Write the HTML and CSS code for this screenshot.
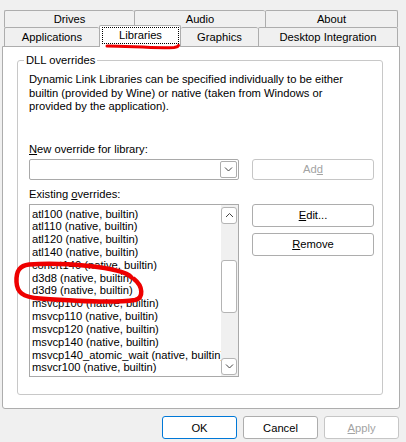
FILE: index.html
```html
<!DOCTYPE html>
<html>
<head>
<meta charset="utf-8">
<link rel="stylesheet" href="styles.css">
</head>
<body>
<div class="window">
  <div class="tabs">
    <div class="tabrow back">
      <div class="tab t-drives">Drives</div>
      <div class="tab t-audio">Audio</div>
      <div class="tab t-about last">About</div>
    </div>
    <div class="tabrow front">
      <div class="tab t-apps">Applications</div>
      <div class="tab selected t-libs"><span class="focus">Libraries</span></div>
      <div class="tab t-gfx">Graphics</div>
      <div class="tab t-desk last">Desktop Integration</div>
    </div>
  </div>
  <div class="panel">
    <fieldset class="group">
      <legend>DLL overrides</legend>
      <p class="desc">Dynamic Link Libraries can be specified individually to be either<br>builtin (provided by Wine) or native (taken from Windows or<br>provided by the application).</p>
      <div class="grid">
        <div class="lbl lbl-new"><u>N</u>ew override for library:</div>
        <div class="combo">
          <span class="drop">
            <svg width="9" height="6" viewBox="0 0 9 6"><path d="M1 1.5 L4.5 5 L8 1.5" fill="none" stroke="#444" stroke-width="1"/></svg>
          </span>
        </div>
        <button class="btn disabled add">Ad<u>d</u></button>
        <div class="lbl lbl-exist">Existing <u>o</u>verrides:</div>
        <div class="list">
          <div class="items">
            <div class="item">atl100 (native, builtin)</div>
            <div class="item">atl110 (native, builtin)</div>
            <div class="item">atl120 (native, builtin)</div>
            <div class="item">atl140 (native, builtin)</div>
            <div class="item">concrt140 (native, builtin)</div>
            <div class="item">d3d8 (native, builtin)</div>
            <div class="item">d3d9 (native, builtin)</div>
            <div class="item">msvcp100 (native, builtin)</div>
            <div class="item">msvcp110 (native, builtin)</div>
            <div class="item">msvcp120 (native, builtin)</div>
            <div class="item">msvcp140 (native, builtin)</div>
            <div class="item">msvcp140_atomic_wait (native, builtin)</div>
            <div class="item">msvcr100 (native, builtin)</div>
          </div>
          <div class="scroll">
            <span class="sbtn"><svg width="9" height="6" viewBox="0 0 9 6"><path d="M1 5 L4.5 1.5 L8 5" fill="none" stroke="#444" stroke-width="1"/></svg></span>
            <span class="thumb"></span>
            <span class="sbtn down"><svg width="9" height="6" viewBox="0 0 9 6"><path d="M1 1.5 L4.5 5 L8 1.5" fill="none" stroke="#444" stroke-width="1"/></svg></span>
          </div>
        </div>
        <div class="side">
          <button class="btn"><u>E</u>dit...</button>
          <button class="btn"><u>R</u>emove</button>
        </div>
      </div>
    </fieldset>
  </div>
  <div class="footer">
    <button class="btn fbtn default">OK</button>
    <button class="btn fbtn">Cancel</button>
    <button class="btn fbtn disabled"><u>A</u>pply</button>
  </div>
  <svg class="annot" width="406" height="442" viewBox="0 0 406 442">
    <path d="M107 46 C 128 46, 152 48.5, 174 47.5 Q 178 47 178.5 45.5" fill="none" stroke="#ee0000" stroke-width="3" stroke-linecap="round"/>
    <path d="M131 277 C 122 267, 62 262, 29 264.5 C 19 265.5, 16 272, 16.5 282 C 17 292, 22 297, 40 298.5 C 80 301.5, 118 302.5, 135 300 C 144 298, 143 286, 134 279" fill="none" stroke="#ee0000" stroke-width="4.5" stroke-linecap="round"/>
  </svg>
</div>
</body>
</html>
```
FILE: styles.css
```css
html, body {
  margin: 0;
  padding: 0;
}
body {
  background: #f0f0f0;
  font-family: "Liberation Sans", Arial, sans-serif;
  font-size: 11.2px;
  color: #000;
}
.window {
  position: relative;
  width: 406px;
  height: 442px;
  box-sizing: border-box;
  padding-top: 10px;
  overflow: hidden;
}
.tabs {
  margin-left: 4px;
}
.tabrow {
  display: flex;
  align-items: flex-start;
}
.tab {
  box-sizing: border-box;
  border: 1px solid #adadad;
  border-bottom: none;
  border-right: none;
  border-radius: 2px 2px 0 0;
  background: #f0f0f0;
  text-align: center;
  white-space: nowrap;
}
.tab.last {
  border-right: 1px solid #adadad;
}
.back .tab {
  height: 17px;
  line-height: 16px;
}
.front .tab {
  height: 19px;
  line-height: 18px;
}
.t-drives { width: 130px; }
.t-audio { width: 131px; }
.t-about { width: 133px; }
.t-apps { width: 95px; }
.t-libs { width: 82px; }
.t-gfx { width: 77px; border-left: none; }
.t-desk { width: 140px; }
.front .tab.selected {
  position: relative;
  z-index: 1;
  height: 22px;
  margin-top: -2px;
  margin-bottom: -1px;
  background: #fff;
  border-right: 1px solid #adadad;
  padding: 1px 1px 0 2px;
  line-height: 15px;
}
.focus {
  display: block;
  box-sizing: border-box;
  height: 17px;
  border: 1px dotted #000;
}
.panel {
  box-sizing: border-box;
  margin-left: 2px;
  width: 398px;
  height: 363px;
  background: #fff;
  border: 1px solid #adadad;
  border-radius: 0 0 3px 3px;
}
.group {
  box-sizing: border-box;
  width: 366px;
  height: 341px;
  margin: 7px 0 0 14px;
  padding: 7px 8px 0 11px;
  border: 1px solid #c8c8c8;
  border-radius: 3px;
  min-width: 0;
}
.group legend {
  padding: 0 2px;
  margin-left: -5px;
  line-height: 12px;
}
.desc {
  margin: 0 0 28px 0;
  line-height: 13.5px;
  white-space: nowrap;
}
.grid {
  display: grid;
  grid-template-columns: 210px 122px;
  column-gap: 13px;
  align-items: start;
}
.lbl {
  grid-column: 1 / span 2;
  line-height: 14px;
  white-space: nowrap;
}
.lbl-new {
  margin-bottom: 3px;
}
.lbl-exist {
  margin-top: 7px;
  margin-bottom: 3px;
}
.combo {
  box-sizing: border-box;
  height: 21px;
  border: 1px solid #a9a9a9;
  border-radius: 2px;
  background: #fff;
  display: flex;
  justify-content: flex-end;
  align-items: flex-start;
  padding: 1px 1px 0 0;
}
.drop {
  box-sizing: border-box;
  width: 17px;
  height: 17px;
  border: 1px solid #adadad;
  border-radius: 2px;
  display: flex;
  align-items: center;
  justify-content: center;
}
.btn {
  box-sizing: border-box;
  height: 23px;
  padding: 0;
  border: 1px solid #adadad;
  border-radius: 3px;
  background: #fff;
  font: inherit;
  color: #000;
  text-align: center;
}
.btn.disabled {
  color: #a3a3a3;
  border-color: #c6c6c6;
}
.add {
  height: 21px;
}
.list {
  box-sizing: border-box;
  height: 173px;
  border: 1px solid #a9a9a9;
  background: #fff;
  display: flex;
  overflow: hidden;
}
.items {
  flex: 1;
  min-width: 0;
  overflow: hidden;
  padding: 3px 0 0 2px;
}
.item {
  line-height: 12.83px;
  white-space: nowrap;
}
.scroll {
  width: 17px;
  flex: none;
  box-sizing: border-box;
  background: #f0f0f0;
  display: flex;
  flex-direction: column;
  padding: 2px 1px 1px 0;
}
.sbtn {
  box-sizing: border-box;
  height: 17px;
  border: 1px solid #b4b4b4;
  border-radius: 3px;
  background: #fff;
  display: flex;
  align-items: center;
  justify-content: center;
}
.sbtn.down {
  margin-top: auto;
}
.thumb {
  box-sizing: border-box;
  height: 53px;
  margin-top: 36px;
  border: 1px solid #b4b4b4;
  border-radius: 3px;
  background: #fff;
}
.side {
  display: flex;
  flex-direction: column;
  gap: 6px;
}
.footer {
  display: flex;
  justify-content: flex-end;
  gap: 6px;
  margin-top: 7px;
  padding-right: 7px;
}
.fbtn {
  width: 75px;
}
.btn.default {
  border-color: #0078d7;
}
.annot {
  position: absolute;
  left: 0;
  top: 0;
  z-index: 2;
  pointer-events: none;
}
```
